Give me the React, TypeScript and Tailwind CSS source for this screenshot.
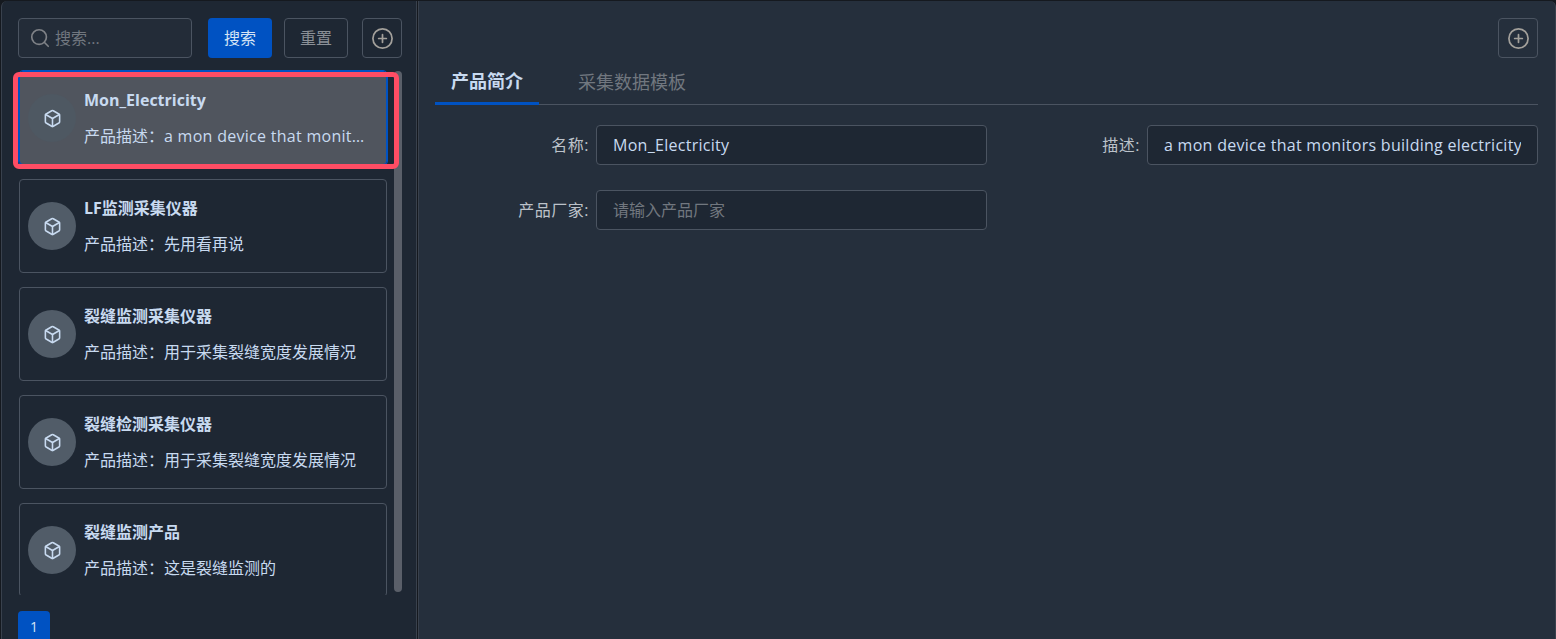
import { Box, CirclePlus, Search } from 'lucide-react';

const products = [
  { name: 'Mon_Electricity', desc: 'a mon device that monitors building electricity' },
  { name: 'LF监测采集仪器', desc: '先用看再说' },
  { name: '裂缝监测采集仪器', desc: '用于采集裂缝宽度发展情况' },
  { name: '裂缝检测采集仪器', desc: '用于采集裂缝宽度发展情况' },
  { name: '裂缝监测产品', desc: '这是裂缝监测的' },
];

function ProductCard({ name, desc, active }: { name: string; desc: string; active?: boolean }) {
  return (
    <div
      className={`flex h-[94px] w-[368px] shrink-0 items-center rounded border pr-[18px] pl-2 ${
        active ? 'border-[#0052c2] bg-[#50555e] outline-1 outline-[#0052c2]' : 'border-[#4b5461]'
      }`}
    >
      <div
        className={`flex h-12 w-12 shrink-0 items-center justify-center rounded-full ${
          active ? 'bg-[#4e5862]' : 'bg-[#515c68]'
        }`}
      >
        <Box size={19} strokeWidth={2} className="text-[#c8daf0]" />
      </div>
      <div className="ml-2 min-w-0 flex-1">
        <div className="truncate text-base leading-6 font-bold text-[#c8daf0]">{name}</div>
        <div className="mt-3 truncate text-base leading-6 text-[#c8daf0]">
          产品描述：<span className={active ? 'tracking-[0.28px]' : ''}>{desc}</span>
        </div>
      </div>
    </div>
  );
}

function Field({ label, value, placeholder, labelWidth }: { label: string; value?: string; placeholder?: string; labelWidth: string }) {
  return (
    <div className="flex items-center">
      <label className={`${labelWidth} shrink-0 pr-[7px] text-right text-base tracking-[0.5px] text-[#bcc2ca]`}>{label}</label>
      <input
        readOnly
        value={value ?? ''}
        placeholder={placeholder}
        className={`h-10 w-[391px] rounded border border-[#4b5461] bg-[#1e2733] px-4 text-base text-[#c8daf0] outline-none placeholder:text-[#71777f] ${
          value ? 'tracking-[0.28px]' : ''
        }`}
      />
    </div>
  );
}

export default function App() {
  return (
    <div
      className="flex h-screen gap-px overflow-hidden bg-[#15191f] pt-px pl-px text-[#c8daf0]"
      style={{ fontFamily: '"Open Sans", "Noto Sans CJK SC", sans-serif' }}
    >
      {/* left list */}
      <aside className="flex h-full w-[416px] shrink-0 flex-col rounded-tl-md border-x border-[#39414d] bg-[#1e2733] pt-[17px] pl-4">
        <div className="flex h-10 shrink-0 items-center">
          <div className="flex h-10 w-[174px] items-center rounded border border-[#4b5461] bg-[#232c38] pl-2.5">
            <Search size={22} strokeWidth={1.8} className="text-[#7f8287]" />
            <span className="ml-1 text-base text-[#71777f]">搜索...</span>
          </div>
          <button className="ml-4 h-10 w-16 rounded bg-[#0052c2] text-base text-[#d5e4f5]">搜索</button>
          <button className="ml-3 h-10 w-16 rounded border border-[#4b5461] text-base text-[#8b9097]">重置</button>
          <button className="ml-3.5 flex h-10 w-10 items-center justify-center rounded border border-[#4b5461]">
            <CirclePlus size={23} strokeWidth={1.8} className="text-[#a3a09b]" />
          </button>
        </div>

        <div className="relative mt-3 flex h-[525px] shrink-0 flex-col gap-3.5 overflow-hidden pt-px pl-px">
          {products.map((p, i) => (
            <ProductCard key={p.name} name={p.name} desc={p.desc} active={i === 0} />
          ))}
          {/* scrollbar */}
          <div className="absolute top-px left-[376px] h-[521px] w-2 rounded bg-[#5a5f69]" />
        </div>

        <button className="mt-4 h-8 w-8 shrink-0 rounded bg-[#0052c2] text-sm text-[#d5e4f5]">1</button>
      </aside>

      {/* detail */}
      <main className="flex min-w-0 flex-1 flex-col rounded-tr-md border-x border-[#39414d] bg-[#252f3c] pt-[17px] pr-[17px] pl-4">
        <div className="flex justify-end">
          <button className="flex h-10 w-10 items-center justify-center rounded border border-[#4b5461]">
            <CirclePlus size={23} strokeWidth={1.8} className="text-[#a3a09b]" />
          </button>
        </div>
        <div className="mt-[6px] flex h-[41px] border-b border-[#4b5461]">
          <div className="-mb-px flex w-[104px] items-center justify-center border-b-[3px] border-[#0052c2] pb-[3px] text-[18px] font-bold text-[#c8daf0]">
            产品简介
          </div>
          <div className="ml-[39px] flex items-center pb-[3px] text-[18px] text-[#71777f]">采集数据模板</div>
        </div>
        <div className="mt-5 flex justify-between">
          <Field label="名称:" value="Mon_Electricity" labelWidth="w-[161px]" />
          <Field label="描述:" value="a mon device that monitors building electricity" labelWidth="w-[60px]" />
        </div>
        <div className="mt-[25px]">
          <Field label="产品厂家:" placeholder="请输入产品厂家" labelWidth="w-[161px]" />
        </div>
      </main>

      {/* annotation */}
      <div className="pointer-events-none absolute top-[72px] left-[13px] h-[97px] w-[386px] rounded-md border-[5px] border-[#ff4d64]" />
    </div>
  );
}
